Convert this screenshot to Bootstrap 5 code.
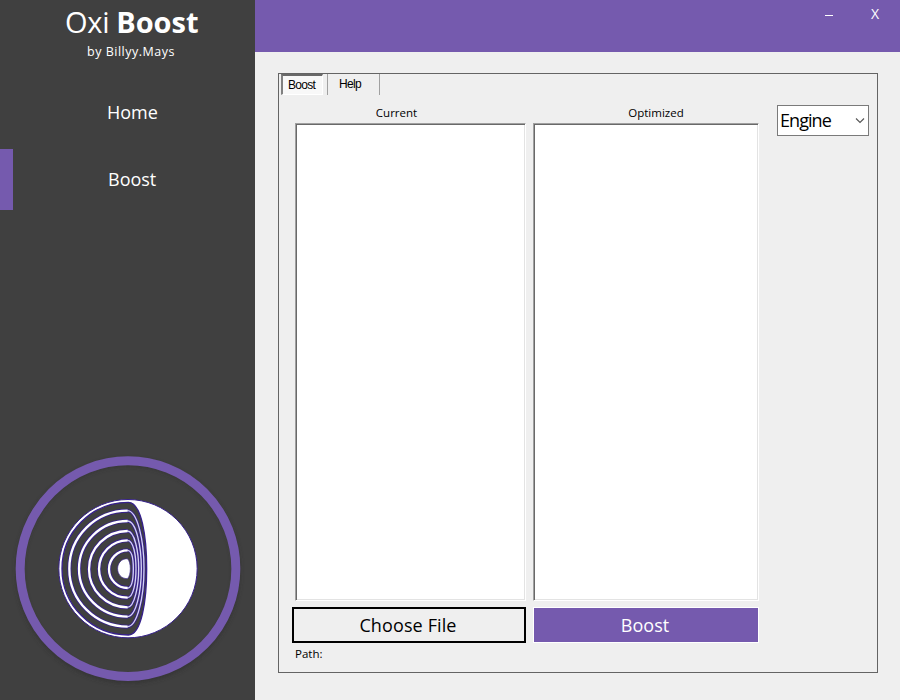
<!DOCTYPE html>
<html lang="en">
<head>
<meta charset="utf-8">
<title>Oxi Boost</title>
<link rel="stylesheet" href="https://cdn.jsdelivr.net/npm/bootstrap@5.3.0/dist/css/bootstrap.min.css">
<style>
:root{--violet:#755aae}
body{width:900px;height:700px;background:#efefef;font-family:"Open Sans","Noto Sans",sans-serif;color:#000;overflow:hidden}
.side{width:255px;background:#404040;color:#fff}
.title{font-size:29px;line-height:40px;padding:2px 0 1px 65px;white-space:nowrap}
.title span{display:inline-block;letter-spacing:-.3px}
.title .strong{font-weight:700;margin-left:7px;letter-spacing:0}
.byline{font-size:12.5px;line-height:18px;padding-left:87px;letter-spacing:.5px}
.menu{margin-top:21px}
.menu .nav-link{height:61px;padding:0 0 0 94px;margin-bottom:6px;border-left:13px solid transparent;border-radius:0;color:#fff;font-size:18px;line-height:61px}
.menu .nav-link.active{border-color:var(--violet);padding-left:95px}
.emblem{margin:0 0 10px 8px}
.topbar{height:52px;background:var(--violet);color:#fff;padding-right:2px}
.win{width:46px;height:28px;line-height:28px;text-align:center;font-size:14px}
.win-min{width:8px;height:1px;background:#fff;margin:15px 19px 0}
.panel{width:600px;height:600px;margin:21px 0 0 23px;border:1px solid #646464}
.tabs{height:22px;padding-left:2px;font:12px/20px "Liberation Sans",Arial,sans-serif}
.tab-on{width:42px;height:21px;background:#f8f8f8;border:1px solid #fff;border-top:2px solid #696969;border-left:2px solid #808080;padding-left:5px;line-height:19px;letter-spacing:-.9px;word-spacing:0}
.tab-on,.tab-off{letter-spacing:-.7px}
.tab-off{width:53px;height:21px;margin-left:4px;border-left:1px solid #a0a0a0;border-right:1px solid #a0a0a0;padding-left:11px}
.caption-sm{font-size:11.5px;line-height:18px;height:18px}
.caption-head{height:19px;line-height:18px;margin-top:8px}
.listing{height:478px;background:#fff;border:1px solid #fff;border-top-color:#a0a0a0;border-left-color:#a0a0a0;box-shadow:inset 1px 1px #696969,inset -1px -1px #e3e3e3}
.act{height:36px;border-radius:0;padding:0 2px 0 0;font-size:18px;line-height:1;margin-top:6px}
.choose,.choose:hover{width:234px;border:2px solid #000;background:#efefef;color:#000;margin-left:-3px;letter-spacing:.12px}
.go,.go:hover{border:1px solid #fff;background:var(--violet);color:#fff}
.col-a{width:231px;margin-left:16px}
.col-b{width:226px;margin-left:7px}
.engine{width:92px;height:31px;margin:9px 0 0 18px;border:1px solid #7a7a7a;background:#fff;font-size:18px;padding:0 3px 1px 2px;letter-spacing:-.95px}
</style>
<script src="https://cdn.jsdelivr.net/npm/bootstrap@5.3.0/dist/js/bootstrap.bundle.min.js"></script>
</head>
<body class="d-flex m-0">
<aside class="side d-flex flex-column flex-shrink-0">
  <div class="title"><span>Oxi</span><span class="strong">Boost</span></div>
  <div class="byline">by Billyy.Mays</div>
  <nav class="menu nav flex-column">
    <a class="nav-link" href="#">Home</a>
    <a class="nav-link active" href="#">Boost</a>
  </nav>
  <svg class="emblem mt-auto" width="240" height="240" viewBox="-6 0 720 720" fill="none">
    <defs><filter id="soft"><feGaussianBlur stdDeviation="7"/></filter>
    <g id="rings">
      <path d="M353 182A175 174 0 0 0 353 530"/><path d="M353 213A146 143.5 0 0 0 353 500"/><path d="M353 243A116 114.5 0 0 0 353 472"/><path d="M353 271A86 86 0 0 0 353 443"/><path d="M353 301A56 56.5 0 0 0 353 414"/>
    </g>
    <g id="folds">
      <path d="M352 182C382 182 402 270 402 356S382 530 352 530"/><path d="M352 213C379 213 394 290 394 356S379 500 352 500"/><path d="M352 243C374 243 386 305 386 356S374 472 352 472"/><path d="M352 271C371 271 378 318 378 356S371 443 352 443"/><path d="M352 301C367 301 370 330 370 356S367 414 352 414"/>
    </g></defs>
    <circle cx="354" cy="363" r="326" stroke="#292929" stroke-width="22" opacity=".5" filter="url(#soft)"/>
    <circle cx="354" cy="356" r="323.5" stroke="#755aae" stroke-width="27"/>
    <circle cx="354" cy="356" r="207.5" fill="#fff" stroke="#36208c" stroke-width="3"/>
    <path d="M355 157A199 199 0 0 0 355 555C395 555 410 450 410 356S395 157 355 157Z" fill="#404040" stroke="#36208c" stroke-width="4"/>
    <use href="#rings" stroke="#36208c" stroke-width="12"/>
    <use href="#folds" stroke="#36208c" stroke-width="9"/>
    <use href="#folds" stroke="#d5d3f2" stroke-width="4"/>
    <use href="#rings" stroke="#fff" stroke-width="7"/>
    <path d="M352 326C313 326 313 386 352 386C364 377 364 335 352 326Z" fill="#fff" stroke="#36208c" stroke-width="2"/>
  </svg>
</aside>
<main class="flex-grow-1">
  <header class="topbar d-flex justify-content-end">
    <div class="win-min"></div><div class="win">X</div>
  </header>
  <section class="panel">
    <div class="tabs d-flex"><div class="tab-on">Boost</div><div class="tab-off">Help</div></div>
    <div class="d-flex align-items-start">
      <div class="col-a">
        <div class="caption-sm caption-head text-center pe-4 me-1">Current</div>
        <div class="listing"></div>
        <button class="act btn choose d-block">Choose File</button>
        <div class="caption-sm mt-0 pt-1 lh-sm">Path:</div>
      </div>
      <div class="col-b">
        <div class="caption-sm caption-head text-center ps-3 ms-1">Optimized</div>
        <div class="listing"></div>
        <button class="act btn go w-100 d-block">Boost</button>
      </div>
      <div class="engine d-flex align-items-center justify-content-between"><span>Engine</span>
        <svg width="10" height="7" viewBox="0 0 10 7" fill="none" stroke="#555" stroke-width="1.1"><path d="M1 1.5 5 5.5 9 1.5"/></svg></div>
    </div>
  </section>
</main>
</body>
</html>
